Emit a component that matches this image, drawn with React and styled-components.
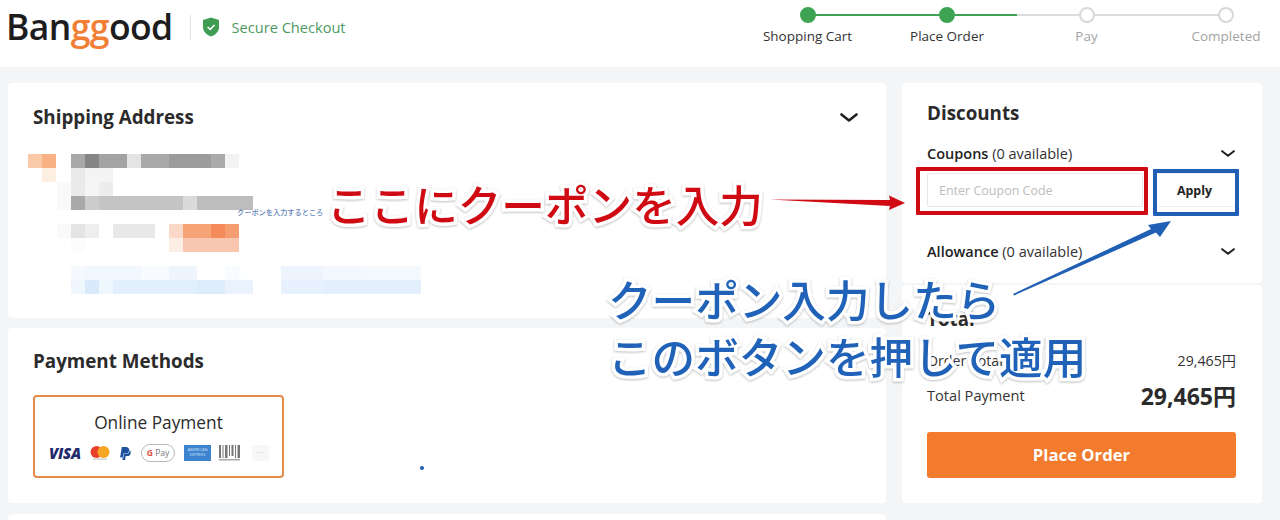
import React from 'react';
import styled, { createGlobalStyle } from 'styled-components';
import { SiPaypal } from 'react-icons/si';

const GlobalStyle = createGlobalStyle`
  html, body {
    margin: 0;
    height: 520px;
    overflow: hidden;
    background: #f4f5f7;
    font-family: "Open Sans", "Noto Sans CJK JP", sans-serif;
    color: #2b2b2b;
  }
`;

const STEPS = [
    { label: 'Shopping Cart', done: true, line: '#3fa354' },
    { label: 'Place Order', done: true, line: 'linear-gradient(90deg, #3fa354 50%, #dcdcdc 50%)' },
    { label: 'Pay', done: false, line: '#dcdcdc' },
    { label: 'Completed', done: false },
];

// blurred address blocks: [row, x, width, colour], cells are 14px
const MOSAIC = [
    [0, 0, 14, '#f9c9a8'], [0, 14, 14, '#f8b183'], [0, 43, 14, '#a8a8a8'], [0, 57, 14, '#858585'],
    [0, 71, 28, '#a3a3a3'], [0, 99, 14, '#e4e4e4'], [0, 113, 28, '#a9a9a9'], [0, 141, 42, '#9c9c9c'],
    [0, 183, 14, '#aaaaaa'], [0, 197, 14, '#f3f3f3'],
    [1, 14, 14, '#fdeee2'], [1, 43, 14, '#e9e9e9'], [1, 57, 28, '#f4f4f4'],
    [2, 29, 14, '#f9f9f9'], [2, 43, 14, '#eaeaea'], [2, 57, 14, '#f5f5f5'], [2, 71, 14, '#ececec'],
    [3, 29, 14, '#f9f9f9'], [3, 43, 14, '#a9a9a9'], [3, 57, 14, '#cccccc'], [3, 71, 84, '#c4c4c4'],
    [3, 155, 14, '#dadada'], [3, 169, 56, '#bdbdbd'],
    [5, 29, 14, '#f9f9f9'], [5, 43, 14, '#e4e4e4'], [5, 57, 14, '#eeeeee'], [5, 85, 42, '#e8e8e8'],
    [5, 141, 14, '#fbd9c8'], [5, 155, 28, '#f6a377'], [5, 183, 14, '#f58b5a'], [5, 197, 14, '#f59c70'],
    [6, 43, 14, '#fcfcfc'], [6, 141, 14, '#fdeee5'], [6, 155, 56, '#f9c6b0'],
    [8, 43, 14, '#f5f9fe'], [8, 57, 56, '#f1f7fe'], [8, 113, 28, '#f7fbff'], [8, 141, 28, '#eef5fd'],
    [8, 197, 14, '#f8fbff'], [8, 211, 14, '#fdfeff'], [8, 253, 42, '#edf4fd'], [8, 295, 42, '#f2f8fe'], [8, 337, 56, '#f4f9fe'],
    [9, 43, 14, '#eff6fe'], [9, 57, 14, '#d8eafc'], [9, 71, 14, '#eef6fe'], [9, 85, 84, '#e2effd'],
    [9, 169, 28, '#ddedfc'], [9, 197, 28, '#eaf3fd'], [9, 253, 42, '#e6f1fd'], [9, 295, 98, '#e3effc'],
];

const ChevronIcon = ({ size = 14 }) => (
    <svg width={size} height={size * 0.5} viewBox="0 0 18 9" fill="none" stroke="#222" strokeWidth="2.6" strokeLinecap="round" strokeLinejoin="round">
        <polyline points="1.5,1.5 9,7.5 16.5,1.5" />
    </svg>
);

const ShieldIcon = () => (
    <svg width="18" height="20" viewBox="0 0 18 20">
        <path d="M9 0.6 L17 3 V10 C17 14.6 13.6 17.8 9 19.6 C4.4 17.8 1 14.6 1 10 V3 Z" fill="#3f9c52" />
        <polyline points="5.6,10 8.2,12.4 12.6,8" fill="none" stroke="#fff" strokeWidth="1.5" />
    </svg>
);

const App = () => (
    <Root>
        <GlobalStyle />
        <Header>
            <Brand>
                <Logo>Ban<LogoAccent>gg</LogoAccent>ood</Logo>
                <Divider />
                <ShieldIcon />
                <SecureText>Secure Checkout</SecureText>
            </Brand>
            <Stepper>
                {STEPS.map(step => (
                    <Step key={step.label} $line={step.line}>
                        <Dot $done={step.done} />
                        <StepLabel $done={step.done}>{step.label}</StepLabel>
                    </Step>
                ))}
            </Stepper>
        </Header>

        <Main>
            <Column>
                <AddressCard>
                    <CardHeader>
                        <CardTitle>Shipping Address</CardTitle>
                        <ChevronIcon size={18} />
                    </CardHeader>
                    <Mosaic width="393" height="140" viewBox="0 0 393 140">
                        {MOSAIC.map(([row, x, w, fill]) => (
                            <rect key={`${row}-${x}`} x={x} y={row * 14} width={w} height="14" fill={fill} />
                        ))}
                    </Mosaic>
                </AddressCard>
                <PaymentCard>
                    <CardTitle>Payment Methods</CardTitle>
                    <PaymentOption>
                        <PaymentName>Online Payment</PaymentName>
                        <PaymentIcons>
                            <VisaMark>VISA</VisaMark>
                            <svg width="20" height="14" viewBox="0 0 20 14">
                                <circle cx="6.5" cy="6" r="6" fill="#e8402a" />
                                <circle cx="13.5" cy="6" r="6" fill="#f5a623" />
                                <rect x="3" y="12.6" width="14" height="1" fill="#bbb" />
                            </svg>
                            <PaypalMark><SiPaypal size={13} /></PaypalMark>
                            <GPayMark><GLetter>G</GLetter> Pay</GPayMark>
                            <AmexMark>AMERICAN EXPRESS</AmexMark>
                            <svg width="22" height="16" viewBox="0 0 22 16" fill="#777">
                                <rect x="0" y="0" width="2" height="13" />
                                <rect x="3.5" y="0" width="1" height="13" />
                                <rect x="6" y="0" width="2.5" height="13" />
                                <rect x="10" y="0" width="1" height="11" />
                                <rect x="12.5" y="0" width="2" height="11" />
                                <rect x="16" y="0" width="1" height="13" />
                                <rect x="18.5" y="0" width="2.5" height="13" />
                                <rect x="0" y="14" width="21" height="1.5" fill="#aaa" />
                            </svg>
                            <MoreMark>···</MoreMark>
                        </PaymentIcons>
                    </PaymentOption>
                </PaymentCard>
                <BottomCard />
            </Column>

            <Column>
                <DiscountCard>
                    <CardTitle>Discounts</CardTitle>
                    <DiscountRow>
                        <DiscountLabel><strong>Coupons</strong> (0 available)</DiscountLabel>
                        <ChevronIcon />
                    </DiscountRow>
                    <CouponRow>
                        <CouponInput placeholder="Enter Coupon Code" />
                        <ApplyButton>Apply</ApplyButton>
                    </CouponRow>
                    <AllowanceRow>
                        <DiscountLabel><strong>Allowance</strong> (0 available)</DiscountLabel>
                        <ChevronIcon />
                    </AllowanceRow>
                </DiscountCard>
                <TotalCard>
                    <CardTitle>Total</CardTitle>
                    <OrderTotalRow>
                        <span>Order Total</span>
                        <span>29,465円</span>
                    </OrderTotalRow>
                    <PaymentRow>
                        <span>Total Payment</span>
                        <GrandTotal>29,465円</GrandTotal>
                    </PaymentRow>
                    <PlaceOrderButton>Place Order</PlaceOrderButton>
                </TotalCard>
            </Column>
        </Main>

        {/* annotations drawn on top of the screenshot */}
        <TinyNote>クーポンを入力するところ</TinyNote>
        <BlueDot />
        <Callout $color="#cf0a12" $left={327} $top={175}>ここにクーポンを入力</Callout>
        <Callout $color="#1f62b8" $left={608} $top={270}>クーポン入力したら<br />このボタンを押して適用</Callout>
        <Frame $color="#cf0a12" $left={916} $top={167} $width={232} $height={48} />
        <Frame $color="#1f5fb4" $left={1153} $top={169} $width={86} $height={47} />
        <ArrowLayer width="1280" height="520" viewBox="0 0 1280 520">
            <polygon points="770,199.5 890,200 889,195.5 905,203 889,210 890,206" fill="#cf0a12" />
            <polygon points="1013,294 1151,229 1148,225 1171,221 1160,237 1156,232.5 1014,295.5" fill="#1f5fb4" />
        </ArrowLayer>
    </Root>
);

const Root = styled.div`
  position: relative;
  width: 1280px;
  height: 520px;
  overflow: hidden;
`;

const Header = styled.header`
  display: flex;
  align-items: flex-start;
  justify-content: space-between;
  height: 67px;
  padding: 0 4px 0 6px;
  box-sizing: border-box;
  background: #fff;
`;

const Brand = styled.div`
  display: flex;
  align-items: center;
  height: 54px;
`;

const Logo = styled.div`
  font-size: 35.5px;
  font-weight: 600;
  letter-spacing: -0.6px;
  color: #1d1d1f;
  line-height: 50px;
  margin-top: -2px;
`;

const LogoAccent = styled.span`
  color: #f27f36;
`;

const Divider = styled.div`
  width: 1px;
  height: 25px;
  margin: 0 11px 0 17px;
  background: #e2e2e2;
`;

const SecureText = styled.span`
  margin-left: 12px;
  font-size: 14.6px;
  color: #4c9a62;
`;

const Stepper = styled.ol`
  display: flex;
  gap: 39.5px;
  margin: 0;
  padding: 0;
  list-style: none;
`;

const Step = styled.li`
  position: relative;
  display: flex;
  flex-direction: column;
  align-items: center;
  width: 100px;

  &::before {
    content: '';
    display: ${p => (p.$line ? 'block' : 'none')};
    position: absolute;
    top: 14px;
    left: 50%;
    width: 139.5px;
    height: 2px;
    background: ${p => p.$line};
  }
`;

const Dot = styled.span`
  position: relative;
  z-index: 1;
  box-sizing: border-box;
  width: 16px;
  height: 16px;
  margin-top: 7px;
  border-radius: 50%;
  background: ${p => (p.$done ? '#3fa354' : '#fff')};
  border: 2px solid ${p => (p.$done ? '#3fa354' : '#d8d8d8')};
`;

const StepLabel = styled.span`
  margin-top: 3px;
  font-size: 13.5px;
  line-height: 20px;
  white-space: nowrap;
  color: ${p => (p.$done ? '#333' : '#a3a3a3')};
`;

const Main = styled.main`
  display: grid;
  grid-template-columns: 878px 360px;
  gap: 16px;
  padding: 16px 8px 0;
`;

const Column = styled.div`
  display: flex;
  flex-direction: column;
`;

const Card = styled.section`
  box-sizing: border-box;
  background: #fff;
  border-radius: 4px;
`;

const AddressCard = styled(Card)`
  height: 235px;
  padding: 20px 20px 0;
`;

const CardHeader = styled.div`
  display: flex;
  align-items: center;
  justify-content: space-between;
  padding: 0 8px 0 5px;
`;

const CardTitle = styled.h2`
  margin: 0;
  font-size: 18.8px;
  line-height: 28px;
  font-weight: 700;
  color: #2b2b2b;
`;

const Mosaic = styled.svg`
  display: block;
  margin-top: 23px;
`;

const PaymentCard = styled(Card)`
  height: 175px;
  margin-top: 10px;
  padding: 19px 25px 0;
`;

const PaymentOption = styled.div`
  box-sizing: border-box;
  width: 251px;
  height: 83px;
  margin-top: 20px;
  padding-top: 15px;
  border: 2px solid #e58a4b;
  border-radius: 4px;
  text-align: center;
`;

const PaymentName = styled.div`
  font-size: 17.3px;
  line-height: 22px;
  font-weight: 500;
  color: #2b2b2b;
`;

const PaymentIcons = styled.div`
  display: flex;
  align-items: center;
  gap: 8px;
  margin-top: 10px;
  padding-left: 13px;
`;

const VisaMark = styled.span`
  width: 34px;
  font-size: 15px;
  line-height: 18px;
  font-weight: 800;
  font-style: italic;
  letter-spacing: -0.2px;
  color: #1f2a6b;
`;

const PaypalMark = styled.span`
  display: flex;
  margin: 0 2px 0 1px;
  color: #1c4f9c;
`;

const GPayMark = styled.span`
  box-sizing: border-box;
  width: 34px;
  height: 18px;
  margin-left: -1px;
  border: 1.5px solid #b9b9b9;
  border-radius: 9px;
  font-size: 8.5px;
  line-height: 15px;
  color: #777;
  white-space: nowrap;
`;

const GLetter = styled.span`
  color: #e0503f;
  font-weight: 700;
`;

const AmexMark = styled.span`
  box-sizing: border-box;
  width: 27px;
  height: 16px;
  margin-left: 1px;
  padding-top: 2px;
  background: #3d83cf;
  font-size: 4px;
  line-height: 5px;
  color: #cfe2f6;
`;

const MoreMark = styled.span`
  width: 17px;
  height: 16px;
  margin-left: 3px;
  border-radius: 2px;
  background: #f7f7f7;
  font-size: 9px;
  line-height: 16px;
  color: #c9c9c9;
`;

const BottomCard = styled(Card)`
  height: 40px;
  margin-top: 11px;
`;

const DiscountCard = styled(Card)`
  height: 200px;
  padding: 16px 25px 0;
`;

const DiscountRow = styled.div`
  display: flex;
  align-items: center;
  justify-content: space-between;
  height: 20px;
  margin-top: 16px;
  padding-right: 2px;
`;

const AllowanceRow = styled(DiscountRow)`
  margin-top: 34px;
`;

const DiscountLabel = styled.span`
  font-size: 14.5px;
  color: #333;

  strong {
    font-weight: 600;
    color: #222;
  }
`;

const CouponRow = styled.div`
  display: flex;
  gap: 10px;
  margin-top: 10px;
`;

const CouponInput = styled.input`
  box-sizing: border-box;
  width: 216px;
  height: 34px;
  padding: 0 11px;
  border: 1px solid #e8e8e8;
  border-radius: 2px;
  outline: none;
  font-family: inherit;
  font-size: 12.5px;

  &::placeholder {
    color: #bdbdbd;
  }
`;

const ApplyButton = styled.button`
  width: 83px;
  height: 34px;
  padding: 0;
  border: 1px solid #eee;
  border-radius: 2px;
  background: #fff;
  font-family: inherit;
  font-size: 12.4px;
  font-weight: 700;
  color: #222;
`;

const TotalCard = styled(Card)`
  height: 218px;
  margin-top: 2px;
  padding: 20px 25px 0;
`;

const TotalRow = styled.div`
  display: flex;
  align-items: center;
  justify-content: space-between;
  padding-right: 1px;
  font-size: 14.6px;
  color: #333;
`;

const OrderTotalRow = styled(TotalRow)`
  height: 20px;
  margin-top: 17px;
  font-size: 14.2px;
`;

const PaymentRow = styled(TotalRow)`
  height: 30px;
  margin-top: 10px;
`;

const GrandTotal = styled.span`
  font-size: 23px;
  font-weight: 700;
  color: #2b2b2b;
`;

const PlaceOrderButton = styled.button`
  width: 309px;
  height: 46px;
  margin-top: 22px;
  padding-bottom: 2px;
  border: none;
  border-radius: 3px;
  background: #f27b2e;
  font-family: inherit;
  font-size: 16.7px;
  font-weight: 700;
  color: #fff;
`;

const TinyNote = styled.span`
  position: absolute;
  left: 237px;
  top: 207px;
  font-size: 7.2px;
  line-height: 10px;
  font-weight: 500;
  white-space: nowrap;
  color: #5f83b8;
`;

const BlueDot = styled.span`
  position: absolute;
  left: 420px;
  top: 466px;
  width: 4px;
  height: 4px;
  border-radius: 50%;
  background: #1f5fb4;
`;

const Callout = styled.div`
  position: absolute;
  left: ${p => p.$left}px;
  top: ${p => p.$top}px;
  font-family: "Noto Sans CJK JP", sans-serif;
  font-size: 43.6px;
  line-height: 57px;
  font-weight: 500;
  white-space: nowrap;
  color: ${p => p.$color};
  -webkit-text-stroke: 7px #fff;
  paint-order: stroke fill;
  filter: drop-shadow(0 1px 1px rgba(0, 0, 0, 0.25));
`;

const Frame = styled.div`
  position: absolute;
  box-sizing: border-box;
  left: ${p => p.$left}px;
  top: ${p => p.$top}px;
  width: ${p => p.$width}px;
  height: ${p => p.$height}px;
  border: 4px solid ${p => p.$color};
  border-radius: 1px;
`;

const ArrowLayer = styled.svg`
  position: absolute;
  left: 0;
  top: 0;
  pointer-events: none;
`;

export default App;
